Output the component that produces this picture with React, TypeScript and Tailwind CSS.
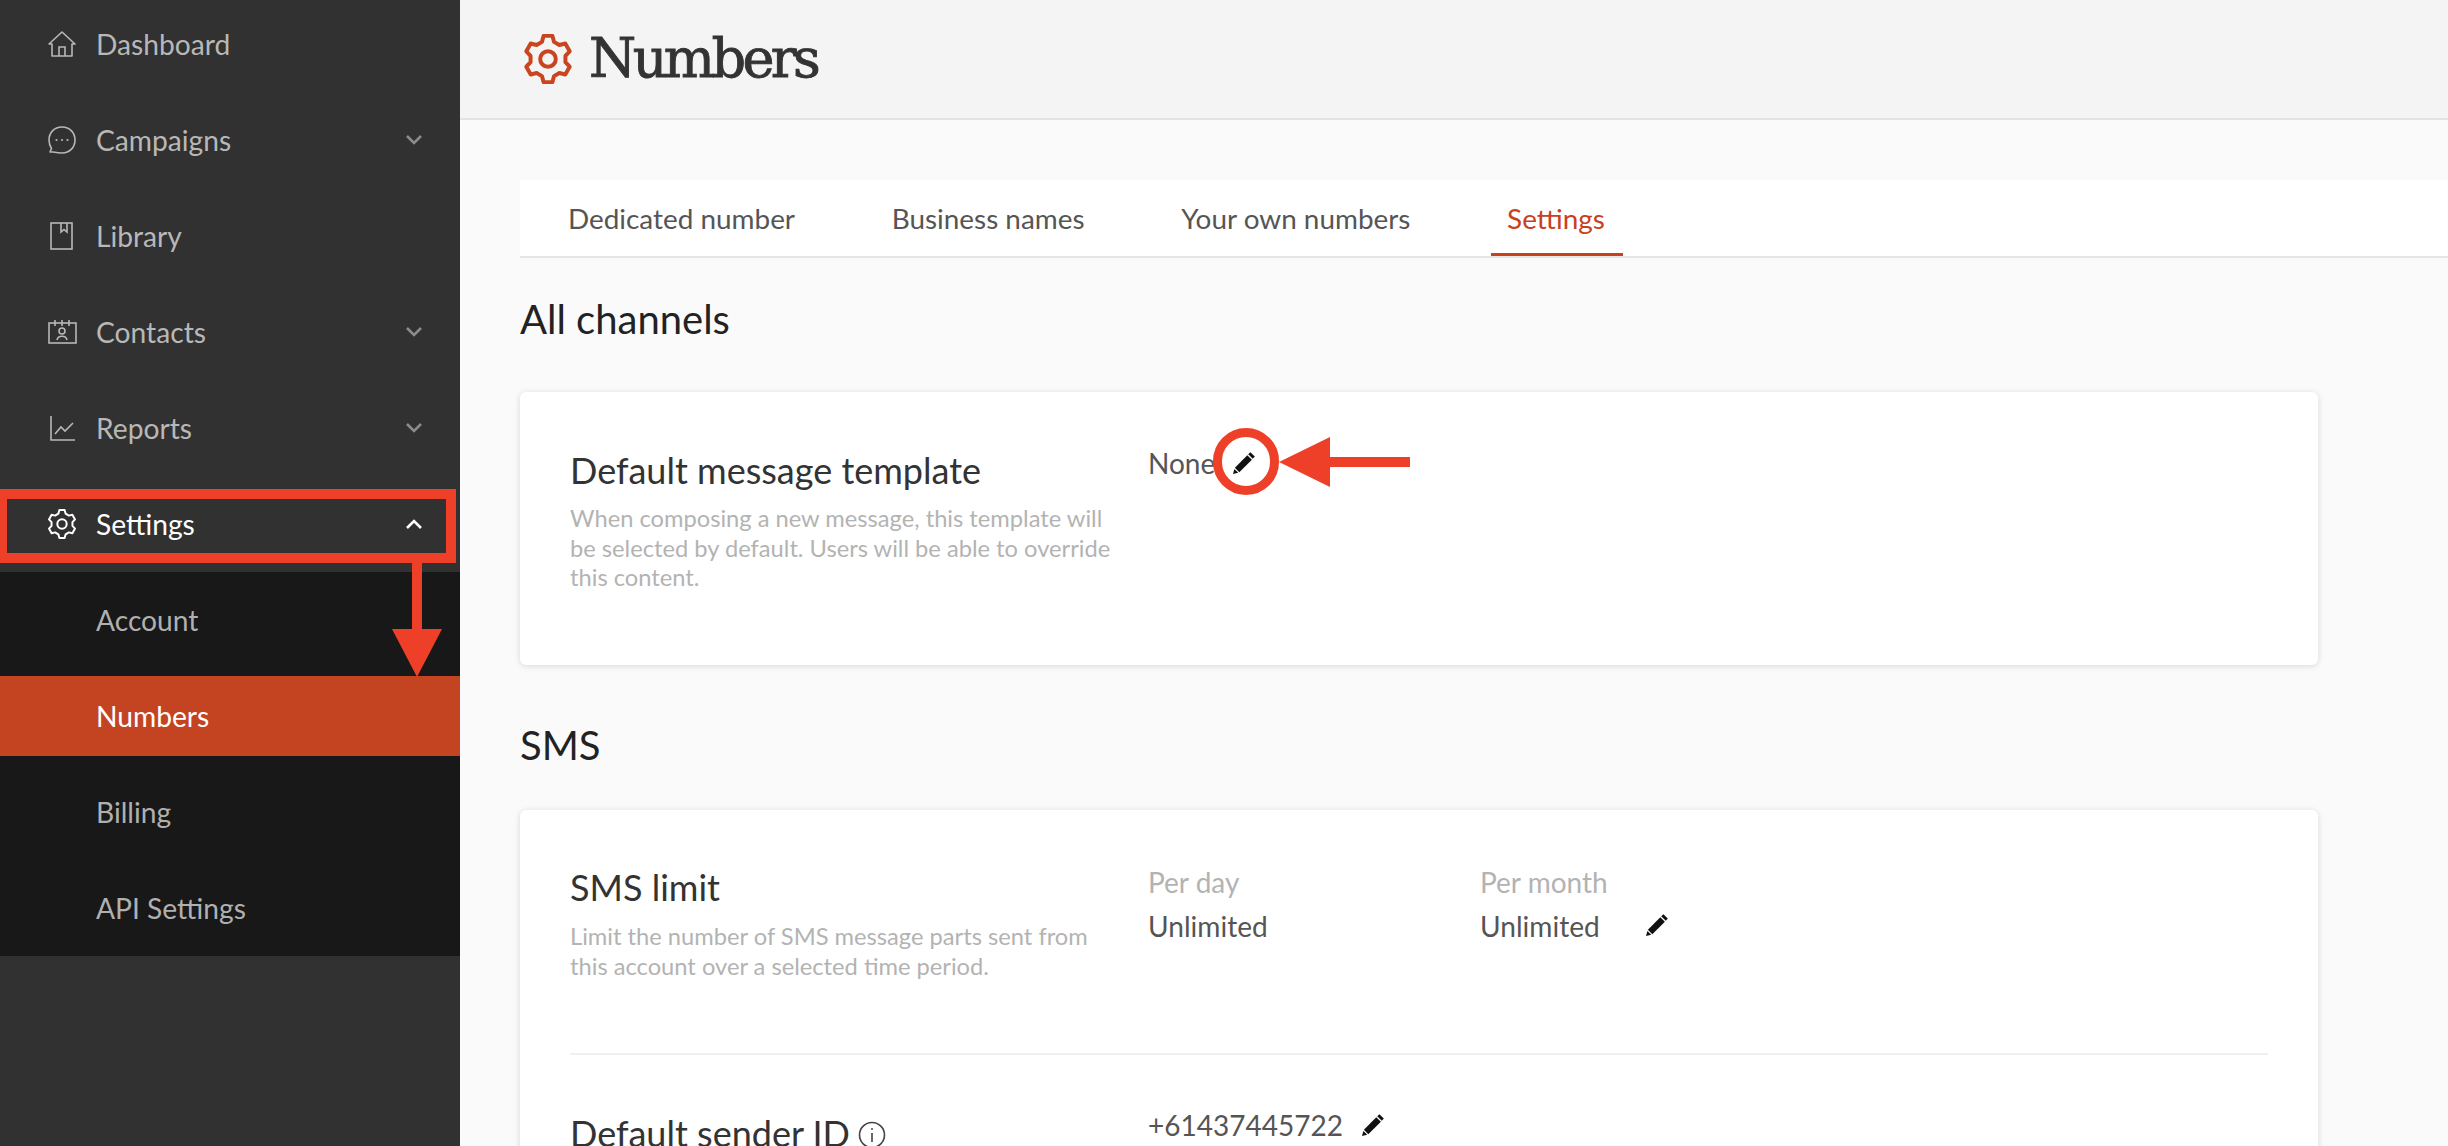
import React from "react";

const Chevron = ({ up, color = "#8c8c8c" }: { up?: boolean; color?: string }) => (
  <svg width="18" height="12" viewBox="0 0 18 12" fill="none" stroke={color} strokeWidth="2.6" className="absolute left-[405px] top-1/2 -translate-y-1/2">
    <path d={up ? "M2 10 L9 3 L16 10" : "M2 2 L9 9 L16 2"} />
  </svg>
);

const HomeI = () => (
  <svg width="30" height="30" viewBox="0 0 30 30" fill="none" stroke="currentColor" strokeWidth="1.6">
    <path d="M2 15 L15 3 L28 15 H25 V27 H5 V15 Z" strokeLinejoin="round" />
    <path d="M12 27 V18 H18 V27" />
  </svg>
);
const ChatI = () => (
  <svg width="30" height="30" viewBox="0 0 30 30" fill="none" stroke="currentColor" strokeWidth="1.6">
    <path d="M15 2 C23 2 28 8 28 15 C28 22 23 28 15 28 C12 28 9 27.5 6 27 L3 27 L4.5 23.5 C3 21 2 18 2 15 C2 8 7 2 15 2 Z" strokeLinejoin="round" />
    <circle cx="9.5" cy="15" r="1.1" fill="currentColor" stroke="none" />
    <circle cx="15" cy="15" r="1.1" fill="currentColor" stroke="none" />
    <circle cx="20.5" cy="15" r="1.1" fill="currentColor" stroke="none" />
  </svg>
);
const BookI = () => (
  <svg width="30" height="30" viewBox="0 0 30 30" fill="none" stroke="currentColor" strokeWidth="1.6">
    <rect x="4" y="2" width="21" height="26" />
    <path d="M14 2 V11 L17 8.5 L20 11 V2" />
  </svg>
);
const ContactI = () => (
  <svg width="30" height="30" viewBox="0 0 30 30" fill="none" stroke="currentColor" strokeWidth="1.6">
    <rect x="2" y="6" width="27" height="20" />
    <path d="M8 3 V9 M15 3 V9 M22 3 V9" />
    <circle cx="15" cy="14" r="3" />
    <path d="M10 23 C11 18 19 18 20 23" />
  </svg>
);
const ChartI = () => (
  <svg width="30" height="30" viewBox="0 0 30 30" fill="none" stroke="currentColor" strokeWidth="1.6">
    <path d="M4 3 V27 H28" />
    <path d="M8 21 L14 14 L18 18 L26 10" />
  </svg>
);

const gearPath = (() => {
  const pts: string[] = [];
  const cx = 24;
  const cy = 24;
  const at = (r: number, a: number) => {
    const t = (a * Math.PI) / 180;
    return `${(cx + r * Math.cos(t)).toFixed(2)} ${(cy + r * Math.sin(t) * 1.03).toFixed(2)}`;
  };
  for (let k = 0; k < 6; k++) {
    const a = -90 + k * 60;
    pts.push(at(17, a - 20), at(22, a - 11), at(22, a + 11), at(17, a + 20));
  }
  return `M${pts.join(" L")} Z`;
})();

const GearI = ({ w = 30, sw = 3.2 }: { w?: number; sw?: number }) => (
  <svg width={w} height={w} viewBox="0 0 48 48" fill="none" stroke="currentColor" strokeWidth={sw} strokeLinejoin="round">
    <path d={gearPath} />
    <circle cx="24" cy="24" r="7.5" />
  </svg>
);

const Pencil = () => (
  <svg width="24" height="24" viewBox="0 0 24 24" fill="#111">
    <path d="M18.4 1.2 L22.8 5.6 L20.8 7.8 L16.2 3.3 Z" />
    <path d="M15.3 4.2 L19.9 8.8 L7.3 21.2 L2.9 16.8 Z" />
    <path d="M2.4 17.9 L6.2 21.7 L1 23 Z" />
  </svg>
);

const NavItem = ({ icon, label, chev, active }: { icon: React.ReactNode; label: string; chev?: boolean; active?: boolean }) => (
  <div className={`relative flex h-[96px] items-center pl-[47px] ${active ? "text-white" : "text-[#b8b8b8]"}`}>
    <span className="flex w-[49px] shrink-0 items-center">{icon}</span>
    <span className="text-[28.2px] leading-none">{label}</span>
    {chev && <Chevron />}
    {active && <Chevron up color="#ffffff" />}
  </div>
);

const SubItem = ({ label, active }: { label: string; active?: boolean }) => (
  <div className="h-[96px] py-2">
    <div className={`flex h-[80px] items-center pl-[96px] text-[28.2px] ${active ? "bg-[#c44422] text-white" : "text-[#b0b0b0]"}`}>{label}</div>
  </div>
);

const Tab = ({ label, active }: { label: string; active?: boolean }) => (
  <div className={`flex h-[76px] items-center border-b-[3px] pl-4 pt-1 text-[27.9px] ${active ? "border-[#c9401d] pr-[18px] text-[#c9401d]" : "border-transparent pr-4 text-[#555555]"}`}>{label}</div>
);

export default function App() {
  return (
    <div className="relative flex h-screen w-full overflow-hidden bg-[#fafafa] font-['Lato','Liberation_Sans',sans-serif]">
      <aside className="w-[460px] shrink-0 bg-[#313131]">
        <div className="-mt-[4px]">
          <NavItem icon={<HomeI />} label="Dashboard" />
          <NavItem icon={<ChatI />} label="Campaigns" chev />
          <NavItem icon={<BookI />} label="Library" />
          <NavItem icon={<ContactI />} label="Contacts" chev />
          <NavItem icon={<ChartI />} label="Reports" chev />
          <NavItem icon={<GearI sw={3.2} />} label="Settings" active />
          <div className="bg-[#181818]">
            <SubItem label="Account" />
            <SubItem label="Numbers" active />
            <SubItem label="Billing" />
            <SubItem label="API Settings" />
          </div>
        </div>
      </aside>

      <main className="min-w-0 flex-1">
        <header className="flex h-[120px] items-center gap-[16px] border-b-2 border-[#e3e3e3] bg-[#f4f4f4] pl-[63px]">
          <span className="text-[#c9451f]"><GearI w={50} sw={3.8} /></span>
          <h1 className="font-['DejaVu_Serif',serif] text-[54px] leading-none tracking-[-3.6px] text-[#333333] [-webkit-text-stroke:0.9px_#333333]">Numbers</h1>
        </header>

        <div className="pl-[60px] pr-[130px]">
          <div className="-mr-[130px] mt-[60px] flex gap-[64.7px] border-b-2 border-[#e5e5e5] bg-white pl-[32px]">
            <Tab label="Dedicated number" />
            <Tab label="Business names" />
            <Tab label="Your own numbers" />
            <Tab label="Settings" active />
          </div>

          <h2 className="mt-[38px] text-[40px] leading-[46px] text-[#222222]">All channels</h2>

          <section className="mt-[50px] h-[273px] rounded-md bg-white px-[50px] pt-[55px] shadow-[0_1px_6px_rgba(0,0,0,0.14)]">
            <div className="flex">
              <div className="w-[578px] shrink-0">
                <h3 className="text-[36px] leading-[46px] text-[#333333]">Default message template</h3>
                <p className="mt-[11px] w-[560px] text-[23.7px] leading-[29.5px] text-[#b3b3b3]">When composing a new message, this template will be selected by default. Users will be able to override this content.</p>
              </div>
              <div className="-mt-[6px] flex h-[44px] items-center gap-[17px] text-[28px] text-[#555555]">
                <span>None</span>
                <span className="-mt-[1px]"><Pencil /></span>
              </div>
            </div>
          </section>

          <h2 className="mt-[57px] text-[40px] leading-[46px] text-[#222222]">SMS</h2>

          <section className="mt-[42px] rounded-md bg-white px-[50px] pt-[54px] shadow-[0_1px_6px_rgba(0,0,0,0.14)]">
            <div className="flex h-[191px] border-b-2 border-[#f0f0f0]">
              <div className="w-[578px] shrink-0">
                <h3 className="text-[36px] leading-[46px] text-[#333333]">SMS limit</h3>
                <p className="mt-[12px] w-[540px] text-[23.7px] leading-[29.5px] text-[#b3b3b3]">Limit the number of SMS message parts sent from this account over a selected time period.</p>
              </div>
              <div className="w-[332px] shrink-0">
                <div className="text-[28px] leading-[36px] text-[#b3b3b3]">Per day</div>
                <div className="mt-2 text-[28.1px] leading-[36px] text-[#555555]">Unlimited</div>
              </div>
              <div>
                <div className="text-[28px] leading-[36px] text-[#b3b3b3]">Per month</div>
                <div className="mt-2 flex items-center gap-[45px] text-[28.1px] leading-[36px] text-[#555555]">
                  <span>Unlimited</span>
                  <span className="-mt-[2px]"><Pencil /></span>
                </div>
              </div>
            </div>
            <div className="flex pt-[55px]">
              <div className="flex w-[578px] shrink-0 items-center gap-2">
                <h3 className="text-[36px] leading-[46px] text-[#333333]">Default sender ID</h3>
                <svg width="28" height="28" viewBox="0 0 28 28" fill="none" stroke="#444" strokeWidth="1.6" className="mt-1">
                  <circle cx="14" cy="14" r="12.5" />
                  <path d="M14 12 V21" />
                  <circle cx="14" cy="8" r="1" fill="#444" stroke="none" />
                </svg>
              </div>
              <div className="-mt-[5px] flex h-[40px] items-center gap-[18px] text-[28px] text-[#555555]">
                <span>+61437445722</span>
                <Pencil />
              </div>
            </div>
          </section>
        </div>
      </main>

      {/* annotations */}
      <div className="pointer-events-none absolute left-0 top-[489px] h-[74px] w-[456px] border-y-[10px] border-r-[10px] border-l-[7px] border-[#ee4028]" />
      <div className="pointer-events-none absolute left-[412px] top-[563px] h-[68px] w-[10px] bg-[#ee4028]" />
      <div className="pointer-events-none absolute left-[392px] top-[629px] h-0 w-0 border-x-[25px] border-t-[48px] border-x-transparent border-t-[#ee4028]" />
      <div className="pointer-events-none absolute left-[1213px] top-[428px] h-[67px] w-[66px] rounded-full border-[9px] border-[#ee4028]" />
      <div className="pointer-events-none absolute left-[1279px] top-[437px] h-0 w-0 border-y-[25px] border-r-[51px] border-y-transparent border-r-[#ee4028]" />
      <div className="pointer-events-none absolute left-[1329px] top-[457px] h-[10px] w-[81px] bg-[#ee4028]" />
    </div>
  );
}
